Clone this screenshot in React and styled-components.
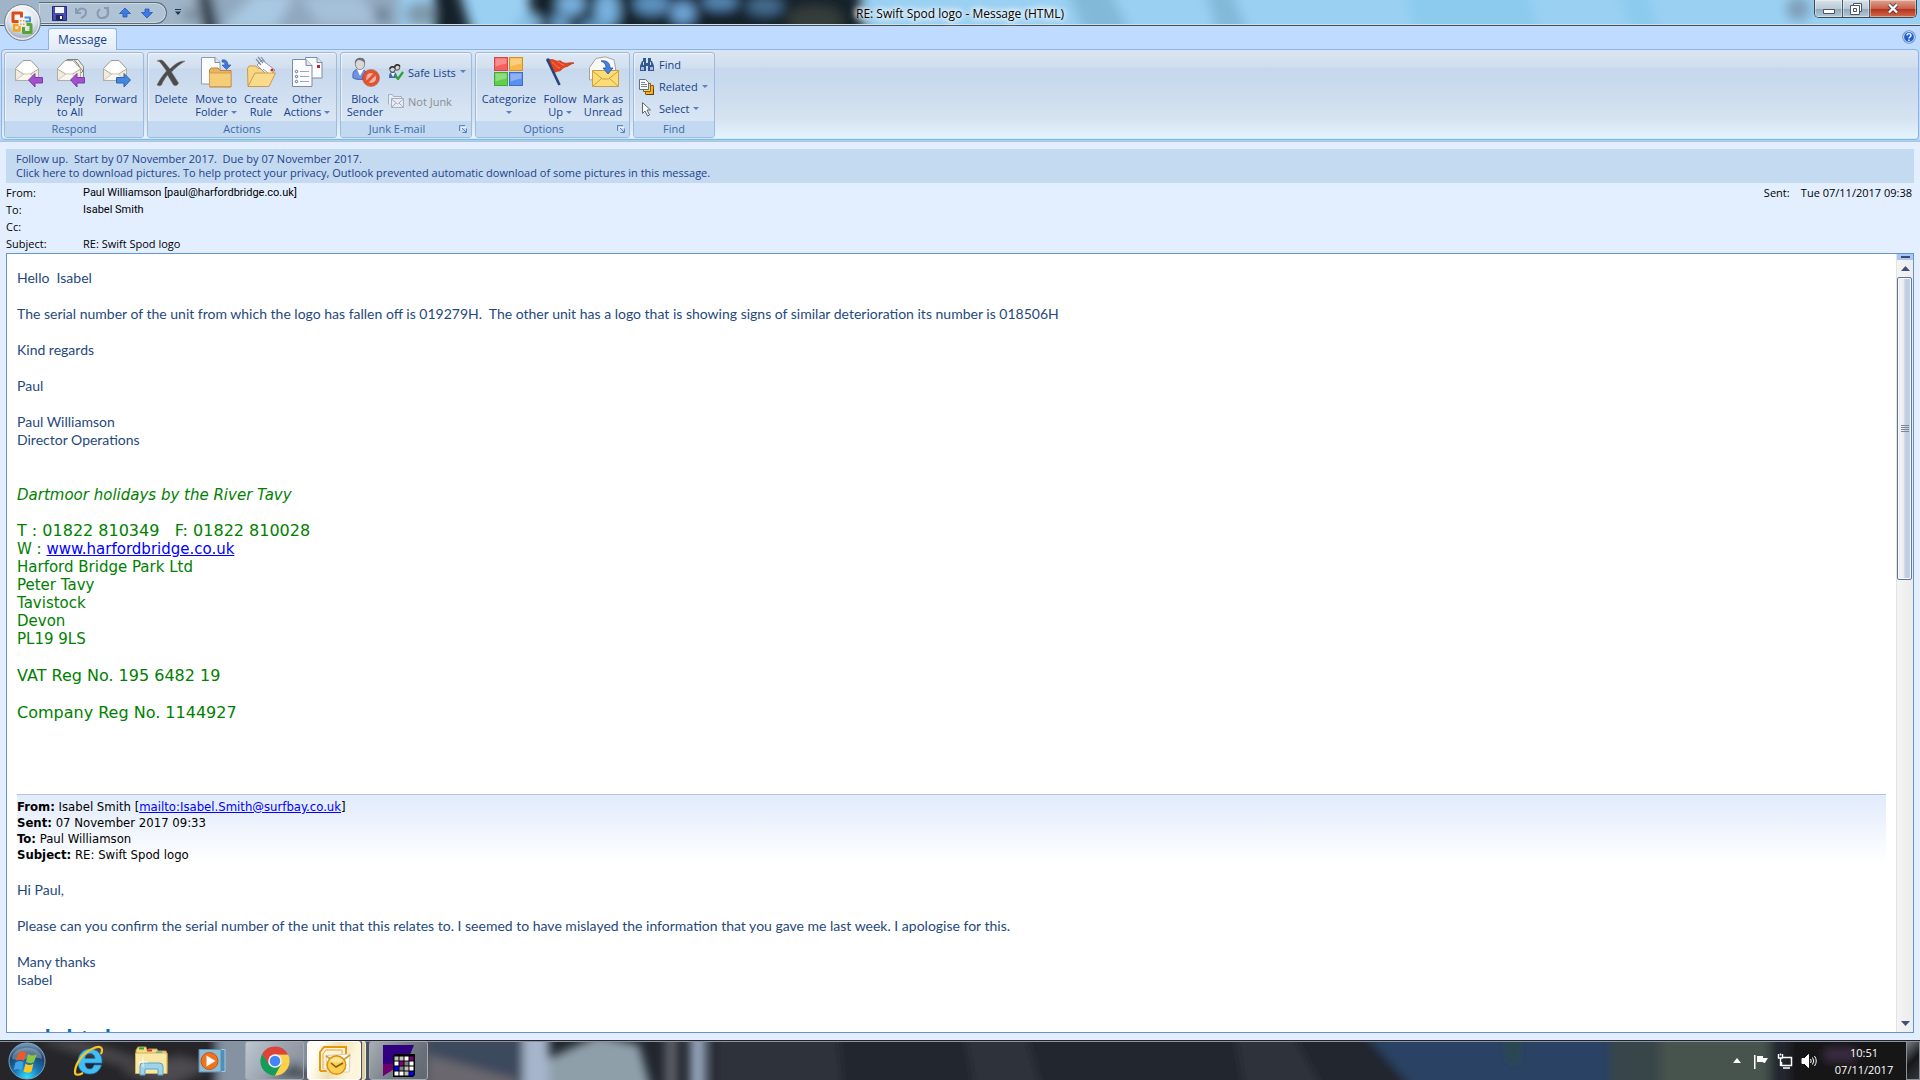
import styled, { createGlobalStyle } from "styled-components";

const GlobalStyle = createGlobalStyle`
  * {
    box-sizing: border-box;
  }
  body {
    margin: 0;
    overflow: hidden;
    font-family: "Open Sans", "Noto Sans", sans-serif;
    font-size: 11px;
  }
  button {
    border: 0;
    margin: 0;
    padding: 0;
    background: none;
    color: inherit;
    font: inherit;
  }
  svg {
    display: block;
    flex: none;
  }
`;

const Page = styled.div`
  display: flex;
  flex-direction: column;
  height: 100vh;
  background: #e3efff;
`;

/* ---------- title bar ---------- */

const TitleBar = styled.header`
  position: relative;
  display: flex;
  align-items: flex-start;
  height: 26px;
  border-bottom: 1px solid #3f5261;
  background: #9ad1f3;
`;

const Backdrop = styled.svg`
  position: absolute;
  inset: 0;
  width: 100%;
  height: 100%;
`;

const OfficeButton = styled.button`
  position: absolute;
  left: 3px;
  top: 3px;
  z-index: 2;
`;

const QuickAccess = styled.div`
  position: relative;
  display: flex;
  align-items: center;
  gap: 6px;
  width: 128px;
  height: 22px;
  margin: 2px 0 0 39px;
  padding-left: 13px;
  border: 1px solid #5c6c7a;
  border-left: 0;
  border-radius: 0 11px 11px 0;
  background: rgba(190, 207, 224, 0.55);
  box-shadow: inset 0 0 0 1px rgba(255, 255, 255, 0.35);
`;

const QuickMore = styled.button`
  position: relative;
  margin: 9px 0 0 8px;
`;

const WindowTitle = styled.h1`
  position: relative;
  flex: 1;
  margin: 0;
  padding: 5px 75px 0 0;
  font-size: 12px;
  font-weight: 400;
  line-height: 18px;
  text-align: center;
  text-shadow: 0 0 4px #fff, 0 0 6px #fff, 0 0 8px #fff, 0 0 10px #fff;
`;

const WindowButtons = styled.div`
  position: relative;
  display: flex;
  height: 18px;
  margin-right: 3px;
  border: 1px solid #3c4852;
  border-top: 0;
  border-radius: 0 0 5px 5px;
  overflow: hidden;
`;

const WindowButton = styled.button`
  display: flex;
  align-items: center;
  justify-content: center;
  width: ${(props) => (props.$close ? 47 : 27)}px;
  height: 17px;
  border-left: ${(props) => (props.$first ? 0 : 1)}px solid #4c5a66;
  box-shadow: inset 0 0 0 1px rgba(255, 255, 255, 0.4);
  background: ${(props) =>
    props.$close
      ? "linear-gradient(#dfa594, #c9604a 50%, #b5301a 52%, #cf6a4c)"
      : "linear-gradient(#d7e2ea, #b9cad7 50%, #8fa8bb 52%, #b4c9d8)"};
`;

/* ---------- ribbon ---------- */

const TabRow = styled.nav`
  display: flex;
  align-items: flex-start;
  justify-content: space-between;
  height: 23px;
  padding: 2px 4px 0 48px;
  background: #bfdbff;
`;

const Tab = styled.button`
  position: relative;
  z-index: 1;
  width: 69px;
  height: 22px;
  border: 1px solid #8db2e3;
  border-bottom: 0;
  border-radius: 3px 3px 0 0;
  background: linear-gradient(#f4f9ff, #e1eaf6);
  color: #15428b;
  font-size: 12px;
  line-height: 20px;
`;

const HelpButton = styled.button`
  margin-top: 2px;
`;

const RibbonWrap = styled.div`
  padding: 0 1px 2px;
  background: linear-gradient(#bfdbff 96%, #a9c1de);
`;

const Ribbon = styled.div`
  display: flex;
  gap: 3px;
  height: 91px;
  padding: 2px;
  border: 1px solid #8db2e3;
  border-radius: 4px;
  box-shadow: inset 0 -1px 0 #b9f3fd;
  background: linear-gradient(
    #dbe6f4 0,
    #cfddec 17px,
    #c7d8ee 18px,
    #c9d9ed 32px,
    #d5e3f0 68px,
    #e5f3fe 88px
  );
`;

const GroupBox = styled.section`
  display: flex;
  flex-direction: column;
  width: ${(props) => props.$width}px;
  height: 86px;
  border: 1px solid #9ebbdb;
  border-radius: 3px;
  box-shadow: inset 1px 1px 0 rgba(255, 255, 255, 0.5);
  background: linear-gradient(
    #dee8f5 0,
    #d1dfef 15px,
    #c7d8ed 16px,
    #d9e6f4 68px
  );
  overflow: hidden;
`;

const GroupBody = styled.div`
  display: flex;
  flex: 1;
  padding: 3px 0 0 3px;
`;

const GroupTitle = styled.div`
  display: flex;
  align-items: center;
  height: 16px;
  background: #c2d9f1;
  color: #3e6aaa;
  line-height: 16px;

  span {
    flex: 1;
    padding-right: ${(props) => (props.$launcher ? 6 : 0)}px;
    text-align: center;
  }

  button {
    margin-right: 4px;
  }
`;

const BigButton = styled.button`
  display: flex;
  flex-direction: column;
  align-items: center;
  width: ${(props) => props.$width}px;
  color: #15428b;
  line-height: 13px;
  white-space: nowrap;

  > svg {
    margin-bottom: 4px;
  }
`;

const LabelLine = styled.span`
  display: flex;
  align-items: center;
  gap: 3px;
  height: 13px;

  svg {
    margin-top: 2px;
  }
`;

const SmallButtons = styled.div`
  display: flex;
  flex-direction: column;
  justify-content: center;
  gap: ${(props) => props.$gap}px;
  padding: 0 0 4px 2px;
`;

const SmallButton = styled.button`
  display: flex;
  align-items: center;
  gap: 4px;
  height: 16px;
  color: ${(props) => (props.disabled ? "#8d8d8d" : "#15428b")};
  white-space: nowrap;
`;

/* ---------- message header ---------- */

const Notice = styled.button`
  display: block;
  margin: 7px 6px 0;
  padding: 3px 10px;
  background: #c4daf0;
  color: #1e3f8b;
  line-height: 14px;
  text-align: left;
  white-space: pre-wrap;
`;

const Fields = styled.div`
  display: flex;
  justify-content: space-between;
  padding: 1px 8px 1px 6px;
`;

const FieldList = styled.dl`
  display: grid;
  grid-template-columns: ${(props) => props.$label}px auto;
  grid-auto-rows: 17px;
  margin: 0;
  line-height: 17px;

  dt,
  dd {
    margin: 0;
    white-space: nowrap;
  }
`;

const Person = styled.dd`
  font-family: Roboto, "Open Sans", sans-serif;
`;

/* ---------- reading pane ---------- */

const Pane = styled.main`
  display: flex;
  flex: 1;
  min-height: 0;
  margin: 0 6px 7px;
  border: 1px solid #6593cf;
  background: #fff;
`;

const Mail = styled.article`
  flex: 1;
  padding: 15px 10px 0;
  overflow: hidden;
  color: #1f497d;
  font-family: Lato, "Open Sans", sans-serif;
  font-size: 14px;
  line-height: 18px;
  white-space: pre-wrap;

  p {
    margin: 0 0 18px;
  }

  a {
    color: #0000ff;
  }
`;

const Signature = styled.div`
  margin: 37px 0 72px;
  color: #008000;
  font-family: Verdana, "DejaVu Sans", sans-serif;
  font-size: 15px;
`;

const Phones = styled.span`
  font-size: 16px;
`;

const Registration = styled.p`
  font-size: 16px;
  line-height: 19px;
`;

const Quoted = styled.div`
  margin-bottom: 18px;
  padding-top: 4px;
  border-top: 1px solid #b5c4df;
  background: linear-gradient(#e1ebfb, #fff);
  color: #000;
  font-family: Tahoma, "DejaVu Sans Condensed", sans-serif;
  font-size: 13px;
  line-height: 16px;
`;

const CutHeading = styled.h2`
  display: flex;
  gap: 8px;
  margin: 35px 0 0;
  padding-left: 20px;
  color: #0070c0;
  font-size: 24px;
  line-height: 30px;
`;

const ScrollBar = styled.div`
  display: flex;
  flex-direction: column;
  width: 17px;
  border-left: 1px solid #e3e3e3;
  background: linear-gradient(90deg, #f4f4f4, #ececec);
`;

const SplitHandle = styled.div`
  height: 6px;
  padding: 2px 4px;
  background: #a6c6f4;

  &::before {
    content: "";
    display: block;
    height: 2px;
    width: 9px;
    background: #3d4a6b;
  }
`;

const ScrollArrow = styled.button`
  display: flex;
  align-items: center;
  justify-content: center;
  height: 17px;
`;

const Track = styled.div`
  flex: 1;
`;

const Thumb = styled.div`
  display: flex;
  flex-direction: column;
  align-items: center;
  justify-content: center;
  gap: 1px;
  width: 15px;
  height: 41%;
  border: 1px solid #61759c;
  border-radius: 2px;
  box-shadow: inset 0 0 0 1px #f4f8fc;
  background: linear-gradient(90deg, #eef0f4 40%, #c3d1e2 55%, #bccbdf 85%, #dce5f0);
`;

const Grip = styled.i`
  width: 8px;
  height: 1px;
  background: #7d8794;
`;

/* ---------- taskbar ---------- */

const TaskBar = styled.footer`
  position: relative;
  display: flex;
  align-items: stretch;
  height: 40px;
  border-top: 1px solid #20262e;
  background: #22272e;
  overflow: hidden;
`;

const Launcher = styled.button`
  position: relative;
  display: flex;
  align-items: center;
  justify-content: center;
  width: ${(props) => props.$width}px;
`;

const TaskButton = styled.button`
  position: relative;
  display: flex;
  align-items: center;
  justify-content: center;
  width: ${(props) => (props.$active ? 54 : 59)}px;
  margin-right: ${(props) => (props.$active ? 0 : 3)}px;
  border: 1px solid ${(props) => (props.$active ? "#fff" : "#a4aab1")};
  border-radius: 3px;
  background: ${(props) =>
    props.$active
      ? "linear-gradient(110deg, #fffdf4 20%, #efdfae 50%, #fdf6dc 80%)"
      : "linear-gradient(120deg, rgba(230,235,240,.6), rgba(170,178,188,.45) 50%, rgba(120,128,140,.35))"};
`;

const StackEdge = styled.i`
  position: relative;
  width: 5px;
  margin-right: 3px;
  border: 1px solid #f7efd2;
  border-left-color: #55513f;
  border-radius: 0 3px 3px 0;
  background: #d9cfae;
`;

const Tray = styled.div`
  position: relative;
  display: flex;
  align-items: center;
  gap: 8px;
  margin-left: auto;
`;

const HiddenIcons = styled.button`
  margin-right: 4px;
`;

const Clock = styled.time`
  width: 68px;
  margin-left: 5px;
  color: #fff;
  line-height: 17px;
  text-align: center;
`;

const ShowDesktop = styled.button`
  align-self: stretch;
  width: 14px;
  border: 1px solid #8b9096;
  background: linear-gradient(135deg, #777c80, #15181b 50%, #33373b);
`;

/* ---------- drawings ---------- */

const Caret = () => (
  <svg width="6" height="4" viewBox="0 0 6 4">
    <path d="M0 0h6L3 3z" fill="#5a82bd" />
  </svg>
);

const Launch = () => (
  <svg width="8" height="8" viewBox="0 0 8 8" fill="none" stroke="#5f83b5">
    <path d="M.5 6V.5H6" />
    <path d="M3 3l4 4M7.500 3.500v4h-4" />
    <path d="M2.500 5V2.500H7" stroke="#fff" opacity=".7" />
  </svg>
);

const Envelope = () => (
  <>
    <path d="M3.500 12.500 11 4.500h8l7.500 8v12h-23z" fill="#f7f6f2" stroke="#a09e98" />
    <path d="M5 12 11.500 6h7l6 6.500L15 18z" fill="#fff" />
    <path d="M3.500 13 12 18.500h6L26.500 13v11.500h-23z" fill="#f1ece0" stroke="#b3ad9f" />
    <path d="M4 24 12 18h6l8 6" fill="#f9f7f0" stroke="#d0c9b8" />
  </>
);

const LeftArrow = () => (
  <path d="M16.500 24 23 17.500v4h7.500v5.500H23v4z" fill="#a44fd0" stroke="#7c3da5" />
);

const ReplyIcon = () => (
  <svg width="32" height="32" viewBox="0 0 32 32">
    <Envelope />
    <LeftArrow />
  </svg>
);

const ReplyAllIcon = () => (
  <svg width="32" height="32" viewBox="0 0 32 32">
    <path d="M12 9 17 3.500h7l5.500 7v13h-9z" fill="#f0ede4" stroke="#85827c" />
    <path d="m24 9 5 6-5 5M8 9l5-5.500h7l5 6" fill="none" stroke="#85827c" />
    <Envelope />
    <LeftArrow />
  </svg>
);

const ForwardIcon = () => (
  <svg width="32" height="32" viewBox="0 0 32 32">
    <Envelope />
    <path d="M30.500 24 24 17.500v4h-7.500v5.500H24v4z" fill="#4485dd" stroke="#2a62b5" />
  </svg>
);

const DeleteIcon = () => (
  <svg width="32" height="32" viewBox="0 0 32 32">
    <path
      d="M2 5c4-2 6-1 8 2l5 6c5-5 9-8 15-8-5 3-10 7-13.500 11l7 11c-1 3-4 3-5 2l-6-10c-3 4-5 7-6 10-1 1-3 1-4.500 0 3-6 6-10 9.500-14L6.500 8C5 6 4 5 2 5z"
      fill="#4c4c4c"
      stroke="#6e6e6e"
      strokeWidth=".5"
    />
  </svg>
);

const MoveIcon = () => (
  <svg width="32" height="32" viewBox="0 0 32 32">
    <path d="M1.500 1.500H15l5 5V28H1.500z" fill="#fbfcfe" stroke="#8d99ac" />
    <path d="M15 1.500v5h5" fill="#dfe6f0" stroke="#7e8ba0" />
    <path d="M22 4c4-1 6 2 6 5h3l-4.500 4.500L22 9h3c0-2-1-3-3-3z" fill="#3f78d8" stroke="#23509f" strokeWidth=".6" />
    <path d="M9.500 14 11 12h7l2 2.500h11V31H9.500z" fill="#e8b366" stroke="#b98439" />
    <path d="M9.500 17H31v13.500H9.500z" fill="#f5cd78" stroke="#cf9f52" />
  </svg>
);

const CreateRuleIcon = () => (
  <svg width="32" height="32" viewBox="0 0 32 32">
    <path d="M2.500 12.500 4 10h7l2 2.500h10V30h-20z" fill="#f8d684" stroke="#c99a4b" />
    <path d="m12 9 5-5 13 10-6 7z" fill="#fff" stroke="#8d99ac" />
    <path d="M11 3l5 6M13 1l5 6M16 1l4 5" stroke="#7e8ba0" strokeWidth="1.200" />
    <path d="m18 13 5 4" stroke="#8894a8" />
    <circle cx="27" cy="14" r="1.600" fill="#d22" />
    <path d="M3 30.500 10 17h20.500L24 30.500z" fill="#fadb8c" stroke="#c99a4b" />
  </svg>
);

const OtherActionsIcon = () => (
  <svg width="32" height="32" viewBox="0 0 32 32">
    <path d="M14.500 1.500H26l5 5V22H14.500z" fill="#fbfcfe" stroke="#7e8ba0" />
    <path d="M26 1.500v5h5" fill="#dfe6f0" stroke="#7e8ba0" />
    <rect x="26" y="9" width="3" height="3" fill="#c8202a" />
    <path d="M1.500 3.500H15l6 6v21H1.500z" fill="#fbfcfe" stroke="#7e8ba0" />
    <path d="M15 3.500v6h6" fill="#dfe6f0" stroke="#7e8ba0" />
    <path d="M9 15.500h9M9 20.500h9M9 25.500h9" stroke="#9aa5b5" />
    <g fill="#fff" stroke="#596b88">
      <circle cx="5.500" cy="15.500" r="1.200" />
      <circle cx="5.500" cy="20.500" r="1.200" />
      <circle cx="5.500" cy="25.500" r="1.200" />
    </g>
  </svg>
);

const BlockIcon = () => (
  <svg width="32" height="32" viewBox="0 0 32 32">
    <path d="M4 22c-1-7 2-9 7-9s7 3 7 9c-4 2-10 2-14 0z" fill="#6f93e4" stroke="#3a559c" strokeWidth=".8" />
    <path d="m8 13 3 7 4-7z" fill="#fff" />
    <ellipse cx="11" cy="8" rx="4.700" ry="5.600" fill="#d8d8d8" stroke="#777" strokeWidth=".8" />
    <path d="M6 8C5.500 4 7.500 1.800 11.500 1.800c4 0 5 3 4.500 6.200-1-3-4-4-6-4s-3 2-4 4z" fill="#707070" />
    <circle cx="22" cy="22" r="6.600" fill="#f3a58d" fillOpacity=".7" stroke="#e8502a" strokeWidth="3" />
    <path d="m17.500 26.500 9-9" stroke="#e8502a" strokeWidth="3" />
    <circle cx="22" cy="22" r="8.400" fill="none" stroke="#a3280d" strokeWidth=".6" />
  </svg>
);

const SafeIcon = () => (
  <svg width="16" height="16" viewBox="0 0 16 16">
    <path d="M1 14c0-5 1-6 4-6s4 2 4 6z" fill="#4668b8" />
    <path d="M3 9h4l-2 4z" fill="#fff" />
    <circle cx="9" cy="3.500" r="2.700" fill="#d6d6d6" stroke="#444" />
    <circle cx="4.500" cy="5.500" r="2.700" fill="#d6d6d6" stroke="#444" />
    <path d="M2 5c0-3 5-3 5-.5M7 3c0-3 4-3 5-.5" stroke="#333" fill="none" strokeWidth="1.500" />
    <path d="m7 11 3 4 5-7" fill="none" stroke="#2fa02f" strokeWidth="2.200" />
  </svg>
);

const NotJunkIcon = () => (
  <svg width="16" height="16" viewBox="0 0 16 16" fill="#e9edf3" stroke="#a5b0c0">
    <path d="M.5 11.500V1.500h4l1 2h8v3" />
    <path d="M3.500 5.500h12v9h-12z" />
    <path d="m3.500 6 6 5 6-5M4 14l4-4M15 14l-4-4" fill="none" />
  </svg>
);

const Square = ({ x, y, light, dark, edge }) => (
  <g>
    <rect x={x} y={y} width="13" height="13" fill={dark} stroke={edge} />
    <path d={`M${x + 1} ${y + 1}h11v5q-6 1-11 3z`} fill={light} />
  </g>
);

const CategorizeIcon = () => (
  <svg width="32" height="32" viewBox="0 0 32 32">
    <Square x={1.5} y={1.5} light="#f98c8c" dark="#f46060" edge="#d04a4a" />
    <Square x={16.5} y={1.5} light="#fbcf7e" dark="#f8b64c" edge="#d4921f" />
    <Square x={1.5} y={16.5} light="#8fdd7e" dark="#62cf4c" edge="#48a836" />
    <Square x={16.5} y={16.5} light="#8db2f5" dark="#5b8eef" edge="#3f6bc0" />
  </svg>
);

const FlagIcon = () => (
  <svg width="32" height="32" viewBox="0 0 32 32">
    <path d="M5 4c4-2 6 2 10 1 2-1 3 2 5 2 3 1 6-1 10 0-4 1-6 4-9 4-3 1-4 4-6 4-3 0-4 1-5 3z" fill="#e8431f" stroke="#b8381b" strokeWidth=".8" />
    <path d="M8 6c3 2 5 6 8 6M14 6c2 0 3 3 6 3" fill="none" stroke="#f98465" />
    <path d="m3.500 4 12 25" stroke="#2b4372" strokeWidth="2.600" />
    <circle cx="4" cy="4" r="1.800" fill="#2b4372" />
  </svg>
);

const UnreadIcon = () => (
  <svg width="32" height="32" viewBox="0 0 32 32">
    <path d="M2.500 11.500 9 2.500 18 .8l9 3 1.500 8v12h-26z" fill="#f8f8f6" stroke="#a3a39f" />
    <path d="M5.500 14.500h26v16h-26z" fill="#fbdc76" stroke="#c9a040" />
    <path d="m5.500 15 10 8h6l10-8M6 30l9-8M31 30l-9-8" fill="none" stroke="#c9a040" />
    <path d="M14 5c6-1 9 2 9 7h3l-5 6-5-6h3c0-3-1-5-5-7z" fill="#4480e0" stroke="#2453a8" strokeWidth=".8" />
  </svg>
);

const FindIcon = () => (
  <svg width="16" height="16" viewBox="0 0 16 16" fill="#33588f">
    <path d="M1 9l2-5h4v10H1zM9 4h4l2 5v5H9z" />
    <path d="M4 1h3v3H4zM9 1h3v3H9zM7 6h2v3H7z" />
    <path d="M2 10h3v3H2zM11 10h3v3h-3z" fill="#9fbce6" />
    <path d="M4 5h1v3H4zM11 5h1v3h-1z" fill="#c9dcf5" />
  </svg>
);

const RelatedIcon = () => (
  <svg width="16" height="16" viewBox="0 0 16 16">
    <path d="M6.500 6.500h8v9h-8z" fill="#f0b429" stroke="#8a5d0b" />
    <path d="M4.500 4.500h7v8h-7z" fill="#fad364" stroke="#8a5d0b" />
    <path d="M.5.500h6l3 3v7h-9z" fill="#fff" stroke="#5f6f87" />
    <path d="M2 3.500h4M2 5.500h6M2 7.500h6" stroke="#6f86ac" />
    <path d="M8 15.500h6.500V10" fill="none" stroke="#5b3c05" />
  </svg>
);

const SelectIcon = () => (
  <svg width="16" height="16" viewBox="0 0 16 16">
    <path d="M3.500 1.500v11l2.500-2.500 2.500 5 2-1-2.500-5h3.500z" fill="#fff" stroke="#5d6673" />
  </svg>
);

const OfficeLogo = () => (
  <svg width="39" height="39" viewBox="0 0 39 39">
    <defs>
      <radialGradient id="orb" cx=".5" cy=".3" r=".75">
        <stop offset="0" stopColor="#fff" />
        <stop offset=".55" stopColor="#dde3ea" />
        <stop offset=".8" stopColor="#aab5c4" />
        <stop offset="1" stopColor="#f1f5fa" />
      </radialGradient>
    </defs>
    <circle cx="19.500" cy="19.500" r="18" fill="url(#orb)" stroke="#75818f" />
    <circle cx="19.500" cy="19.500" r="16.500" fill="none" stroke="#fff" opacity=".8" />
    <g fill="none" strokeWidth="3" strokeLinejoin="round">
      <path d="M15.500 18.500H10V10h8.500v4.500" stroke="#dd4a14" />
      <path d="M21.500 14.500h5.500V18.500H22.500" stroke="#3d8edb" strokeWidth="2" />
      <path d="M15.500 22H11v5.500h5.500V23" stroke="#f2a51c" strokeWidth="2.400" />
      <path d="M20.500 24v5.500H28V21.500H23.500" stroke="#56a52c" />
    </g>
    <path d="M17 17h1.500v1.500H17zM20 17h1.500v1.500H20zM17 20.500h1.500V22H17zM20 20.500h1.500V22H20z" fill="#f0a020" />
  </svg>
);

const SaveIcon = () => (
  <svg width="15" height="15" viewBox="0 0 15 15">
    <path d="M.5.500h14v14h-14z" fill="#4a4bb5" stroke="#29297d" />
    <path d="M3 1h9v6H3z" fill="#f2f5fc" />
    <path d="M4 9h7v5H4z" fill="#23235e" />
    <path d="M8 10h2v3H8z" fill="#fff" />
  </svg>
);

const UndoIcon = ({ flip }) => (
  <svg width="16" height="16" viewBox="0 0 16 16" fill="none" stroke="#8799b3" strokeWidth="2">
    {flip ? (
      <path d="M5 4c-4 3-3 9 2 9s8-4 5-9M13 8V3H9" />
    ) : (
      <path d="M3 3v5h5M4 7c3-5 9-4 9 0 0 3-2 5-5 6" />
    )}
  </svg>
);

const NavArrow = ({ down }) => (
  <svg width="16" height="16" viewBox="0 0 16 16">
    <path
      d={down ? "M8 13 2.500 7.500h3.500V4h4v3.500h3.500z" : "M8 3 2.500 8.500h3.500V12h4V8.500h3.500z"}
      fill="#3d7be6"
      stroke="#2356b6"
      strokeWidth=".8"
    />
  </svg>
);

const StartOrb = () => (
  <svg width="38" height="38" viewBox="0 0 38 38">
    <defs>
      <radialGradient id="start" cx=".5" cy=".95" r=".9">
        <stop offset="0" stopColor="#2fe0ff" />
        <stop offset=".4" stopColor="#1a78b8" />
        <stop offset=".75" stopColor="#1b4268" />
        <stop offset="1" stopColor="#6c93b3" />
      </radialGradient>
    </defs>
    <circle cx="19" cy="19" r="18" fill="url(#start)" stroke="#7fa5c0" />
    <path d="M4 17C5 2 33 2 34 17c-9-4-21 3-30 0z" fill="#fff" opacity=".28" />
    <path d="M10 11c3-2 6-2 8 0l-2 8c-3-2-5-2-8 0z" fill="#ee5a25" />
    <path d="M20 12c3 2 6 2 9 0l-3 8c-3 2-6 1-8 0z" fill="#8cc63e" />
    <path d="M7.500 20.500c3-2 6-2 8 0l-2 8c-3-2-5-2-8 0z" fill="#3fa3ea" />
    <path d="M17.500 21.500c3 2 5 2 8 0l-2 8c-3 2-6 1-8 0z" fill="#fbc61d" />
  </svg>
);

const IeIcon = () => (
  <svg width="32" height="32" viewBox="0 0 32 32">
    <path
      d="M28.500 20c-2 6-6 9-11.500 9-8 0-12-5-12-12S10 4 17 4s12.500 5 12 14H12c0 4 2 6 5 6 2 0 3-1 4-4zM12 13.500h10c0-3-2-5-5-5s-5 2-5 5z"
      fill="#45bdf2"
      stroke="#1b7fc4"
      strokeWidth=".7"
      fillRule="evenodd"
    />
    <path d="M28 9c3-7-1-9-9-5C10 8 2 19 2 27c0 4 4 3 8 1" fill="none" stroke="#f5c624" strokeWidth="2.200" />
  </svg>
);

const FolderIcon = () => (
  <svg width="34" height="32" viewBox="0 0 34 32">
    <path d="M2 5 4 2h8l1 3 2-1h8l1 2h8l1 3v19H2z" fill="#f2dc8c" stroke="#b89b44" />
    <path d="M5 2.500h5v2H5z" fill="#2ba52b" />
    <path d="M13 4.500h5v2h-5z" fill="#d33" />
    <path d="M22 6.500h6v2h-6z" fill="#35a3e0" />
    <path d="M1.500 8H33v20.500H1.500z" fill="#f8e8a6" stroke="#cdb15a" />
    <path d="M6 29V21q0-3 3-3h16q4 0 4 3v9h-5v-6H11v6H6z" fill="#9ed3ec" stroke="#5da3c7" />
    <path d="M9 12v10M4 17h10" stroke="#fff" opacity=".8" />
  </svg>
);

const PlayerIcon = () => (
  <svg width="28" height="28" viewBox="0 0 28 28">
    <path d="M6 2.500h21v22H6z" fill="#4f8fb8" stroke="#a3cbe2" />
    <path d="M1 2.500h22v22.500H1z" fill="#8fbcd8" stroke="#5790b5" />
    <circle cx="11.500" cy="14" r="8.500" fill="#ee7420" stroke="#c95410" />
    <path d="m8.500 8.500 9 5.500-9 5.500z" fill="#fff" />
  </svg>
);

const ChromeIcon = () => (
  <svg width="30" height="30" viewBox="0 0 30 30">
    <path d="M15 8.400h13A14.700 14.700 0 0 1 14.600 29.700L21 18z" fill="#fdd14a" />
    <path d="M2.300 7.700A14.700 14.700 0 0 0 14.700 29.700L21 18.500 9.300 18.500z" fill="#129d59" />
    <path d="M15 8.400H28A14.700 14.700 0 0 0 2.300 7.700L9 19z" fill="#db4437" />
    <circle cx="15" cy="15" r="6.800" fill="#f4f4f4" />
    <circle cx="15" cy="15" r="5.300" fill="#4285f4" />
  </svg>
);

const OutlookIcon = () => (
  <svg width="34" height="32" viewBox="0 0 34 32">
    <path d="M3 26V7l4-5h22v8" fill="#fdf3d6" stroke="#e8960f" strokeWidth="2" />
    <path d="M6 24V9l3-4h16v5" fill="none" stroke="#e8a43c" />
    <path d="M3 26h9" stroke="#e8960f" strokeWidth="2" />
    <path d="M9 10.500 33 9l-1 18H10z" fill="#fff" stroke="#d9cdb0" />
    <path d="m9 11 12 8 12-9" fill="none" stroke="#d89a30" strokeWidth="1.600" />
    <circle cx="19.500" cy="20" r="9.300" fill="#fbd04f" stroke="#d9920e" strokeWidth="1.400" />
    <path d="M13 16c3-5 10-5 13 0-4 2-9 2-13 0z" fill="#fff" opacity=".45" />
    <path d="m14 18 5 4 7-4" fill="none" stroke="#8a5d0b" strokeWidth="1.600" />
  </svg>
);

const tiles = [
  ["#c0c0c0", "#c0c0c0", "#fff", "#800080"],
  ["#fff", "#800080", "#808080", "#fff"],
  ["#0000ff", "#808080", "#c0c0c0", "#fff"],
  ["#fff", "#fff", "#c0c0c0", "#0000ff"],
];

const GridAppIcon = () => (
  <svg width="34" height="32" viewBox="0 0 34 32">
    <path d="M1 0h31l-5 12H14v10L1 31z" fill="#300080" />
    <path d="M1 19h11v5L1 31z" fill="#700070" />
    <path d="M11 11 13 9h20v21l-2 2H11z" fill="#000" />
    {tiles.map((row, y) =>
      row.map((fill, x) => (
        <rect key={`${x}-${y}`} x={12.5 + x * 5} y={11.5 + y * 5} width="4" height="4" fill={fill} />
      ))
    )}
  </svg>
);

/* ---------- data ---------- */

const respond = [
  { lines: ["Reply"], width: 40, Icon: ReplyIcon },
  { lines: ["Reply", "to All"], width: 44, Icon: ReplyAllIcon },
  { lines: ["Forward"], width: 48, Icon: ForwardIcon },
];

const actions = [
  { lines: ["Delete"], width: 40, Icon: DeleteIcon },
  { lines: ["Move to", "Folder"], width: 50, Icon: MoveIcon, menu: true },
  { lines: ["Create", "Rule"], width: 40, Icon: CreateRuleIcon },
  { lines: ["Other", "Actions"], width: 52, Icon: OtherActionsIcon, menu: true },
];

const options = [
  { lines: ["Categorize", ""], width: 60, Icon: CategorizeIcon, menu: true },
  { lines: ["Follow", "Up"], width: 42, Icon: FlagIcon, menu: true },
  { lines: ["Mark as", "Unread"], width: 44, Icon: UnreadIcon },
];

const Big = ({ lines, width, Icon, menu }) => (
  <BigButton $width={width}>
    <Icon />
    {lines.map((line, i) => (
      <LabelLine key={i}>
        {line}
        {menu && i === lines.length - 1 && <Caret />}
      </LabelLine>
    ))}
  </BigButton>
);

const Small = ({ Icon, label, menu, disabled }) => (
  <SmallButton disabled={disabled}>
    <Icon />
    {label}
    {menu && <Caret />}
  </SmallButton>
);

const Group = ({ title, width, launcher, children }) => (
  <GroupBox $width={width}>
    <GroupBody>{children}</GroupBody>
    <GroupTitle $launcher={launcher}>
      <span>{title}</span>
      {launcher && (
        <button aria-label={`${title} settings`}>
          <Launch />
        </button>
      )}
    </GroupTitle>
  </GroupBox>
);

const Title = () => (
  <TitleBar>
    <Backdrop viewBox="0 0 1920 25" preserveAspectRatio="none">
      <defs>
        <filter id="soft" filterUnits="userSpaceOnUse" x="-60" y="-40" width="2040" height="110">
          <feGaussianBlur stdDeviation="6" />
        </filter>
      </defs>
      <g filter="url(#soft)">
        <path d="M-40-30h250v90H-40z" fill="#9fb4c6" />
        <path d="M205-30h195v90H205z" fill="#91a9bf" />
        <path d="M196-10h14l12 50h-18z" fill="#26323c" />
        <path d="M220 30 255-6h40l-20 36z" fill="#a9c8e2" />
        <path d="M300-5h60l20 30h-60z" fill="#a5c0d9" />
        <circle cx="190" cy="15" r="6" fill="#65788b" />
        <circle cx="382" cy="15" r="7" fill="#5d7184" />
        <ellipse cx="420" cy="14" rx="14" ry="12" fill="#7f98ab" />
        <path d="M434-20h22l18 60h-40z" fill="#16222c" />
        <path d="M532-30h325l10 90H525z" fill="#182129" />
        <ellipse cx="528" cy="24" rx="14" ry="9" fill="#86c0e8" />
        <ellipse cx="571" cy="4" rx="14" ry="11" fill="#78b2e0" />
        <ellipse cx="560" cy="24" rx="10" ry="10" fill="#6a9fcb" />
        <ellipse cx="607" cy="10" rx="12" ry="18" fill="#78b2e0" />
        <ellipse cx="592" cy="28" rx="12" ry="8" fill="#5f94c4" />
        <ellipse cx="652" cy="4" rx="18" ry="10" fill="#5f94c4" />
        <ellipse cx="683" cy="13" rx="12" ry="11" fill="#6fa6da" />
        <ellipse cx="720" cy="2" rx="18" ry="7" fill="#5b8fc0" />
        <ellipse cx="765" cy="6" rx="18" ry="9" fill="#456d91" />
        <ellipse cx="815" cy="20" rx="28" ry="14" fill="#353e3a" />
        <path d="M1060-30h40l44 90h-50zM1200-30h24l34 90h-34z" fill="#83b9d8" />
        <path d="M1400-30h120l30 90h-130zM1610-30h30l30 90h-30z" fill="#8ccbee" />
        <circle cx="1798" cy="9" r="12" fill="#7d9fb9" />
      </g>
      <path d="M0 24h1920v1H0z" fill="#d3dfe0" />
    </Backdrop>
    <OfficeButton aria-label="Office Button">
      <OfficeLogo />
    </OfficeButton>
    <QuickAccess>
      <button aria-label="Save"><SaveIcon /></button>
      <button aria-label="Undo"><UndoIcon /></button>
      <button aria-label="Redo"><UndoIcon flip /></button>
      <button aria-label="Previous Item"><NavArrow /></button>
      <button aria-label="Next Item"><NavArrow down /></button>
    </QuickAccess>
    <QuickMore aria-label="Customize Quick Access Toolbar">
      <svg width="6" height="6" viewBox="0 0 6 6" fill="#1d3557">
        <path d="M0 0h6v1H0zM0 2.500h6L3 6z" />
      </svg>
    </QuickMore>
    <WindowTitle>RE: Swift Spod logo - Message (HTML)</WindowTitle>
    <WindowButtons>
      <WindowButton $first aria-label="Minimize">
        <svg width="12" height="10" viewBox="0 0 12 10">
          <path d="M.5 5.500h11v4H.5z" fill="#fff" stroke="#4b5563" />
        </svg>
      </WindowButton>
      <WindowButton aria-label="Restore">
        <svg width="12" height="12" viewBox="0 0 12 12" fill="#fff" stroke="#4b5563">
          <path d="M3.500.500h8v8h-8z" />
          <path d="M.5 2.500h9v9h-9z" />
          <path d="M3.500 5.500h3v3h-3z" />
        </svg>
      </WindowButton>
      <WindowButton $close aria-label="Close">
        <svg width="12" height="11" viewBox="0 0 12 11">
          <path d="m2 1.500 8 8m0-8-8 8" stroke="#5a3b3b" strokeWidth="4" />
          <path d="m2 1.500 8 8m0-8-8 8" stroke="#fff" strokeWidth="2.400" />
        </svg>
      </WindowButton>
    </WindowButtons>
  </TitleBar>
);

const RibbonArea = () => (
  <>
    <TabRow>
      <Tab>Message</Tab>
      <HelpButton aria-label="Help">
        <svg width="14" height="14" viewBox="0 0 14 14">
          <circle cx="7" cy="7" r="6.300" fill="#1f5fd0" stroke="#7e9cc9" />
          <circle cx="7" cy="7" r="5.400" fill="none" stroke="#fff" strokeWidth=".8" />
          <path d="M5 5.500c0-2.500 4-2.500 4 0C9 7 7 6.800 7 8.500M7 9.600v1.400" fill="none" stroke="#fff" strokeWidth="1.400" />
        </svg>
      </HelpButton>
    </TabRow>
    <RibbonWrap>
      <Ribbon>
        <Group title="Respond" width={140}>
          {respond.map((item, i) => <Big key={i} {...item} />)}
        </Group>
        <Group title="Actions" width={190}>
          {actions.map((item, i) => <Big key={i} {...item} />)}
        </Group>
        <Group title="Junk E-mail" width={132} launcher>
          <Big lines={["Block", "Sender"]} width={42} Icon={BlockIcon} />
          <SmallButtons $gap={13}>
            <Small Icon={SafeIcon} label="Safe Lists" menu />
            <Small Icon={NotJunkIcon} label="Not Junk" disabled />
          </SmallButtons>
        </Group>
        <Group title="Options" width={155} launcher>
          {options.map((item, i) => <Big key={i} {...item} />)}
        </Group>
        <Group title="Find" width={82}>
          <SmallButtons $gap={6}>
            <Small Icon={FindIcon} label="Find" />
            <Small Icon={RelatedIcon} label="Related" menu />
            <Small Icon={SelectIcon} label="Select" menu />
          </SmallButtons>
        </Group>
      </Ribbon>
    </RibbonWrap>
  </>
);

const MessageHeader = () => (
  <>
    <Notice>
      {"Follow up.  Start by 07 November 2017.  Due by 07 November 2017.\n"}
      Click here to download pictures. To help protect your privacy, Outlook prevented automatic download of some pictures in this message.
    </Notice>
    <Fields>
      <FieldList $label={77}>
        <dt>From:</dt>
        <Person>Paul Williamson [paul@harfordbridge.co.uk]</Person>
        <dt>To:</dt>
        <Person>Isabel Smith</Person>
        <dt>Cc:</dt>
        <Person />
        <dt>Subject:</dt>
        <dd>RE: Swift Spod logo</dd>
      </FieldList>
      <FieldList $label={37}>
        <dt>Sent:</dt>
        <dd>Tue 07/11/2017 09:38</dd>
      </FieldList>
    </Fields>
  </>
);

const Message = () => (
  <Mail>
    <p>{"Hello  Isabel"}</p>
    <p>
      {"The serial number of the unit from which the logo has fallen off is 019279H.  The other unit has a logo that is showing signs of similar deterioration its number is 018506H"}
    </p>
    <p>Kind regards</p>
    <p>Paul</p>
    <p>{"Paul Williamson\nDirector Operations"}</p>
    <Signature>
      <p><em>Dartmoor holidays by the River Tavy</em></p>
      <p>
        <Phones>{"T : 01822 810349   F: 01822 810028"}</Phones>
        {"\nW : "}
        <a href="#harfordbridge">www.harfordbridge.co.uk</a>
        {"\nHarford Bridge Park Ltd\nPeter Tavy\nTavistock\nDevon\nPL19 9LS"}
      </p>
      <Registration>VAT Reg No. 195 6482 19</Registration>
      <Registration>Company Reg No. 1144927</Registration>
    </Signature>
    <Quoted>
      <b>From:</b> Isabel Smith [<a href="#mailto">mailto:Isabel.Smith@surfbay.co.uk</a>]{"\n"}
      <b>Sent:</b> 07 November 2017 09:33{"\n"}
      <b>To:</b> Paul Williamson{"\n"}
      <b>Subject:</b> RE: Swift Spod logo
    </Quoted>
    <p>Hi Paul,</p>
    <p>
      Please can you confirm the serial number of the unit that this relates to. I seemed to have mislayed the information that you gave me last week. I apologise for this.
    </p>
    <p>{"Many thanks\nIsabel"}</p>
    <CutHeading>
      <span>d</span>
      <span>d</span>
      <span>t</span>
      <span>d</span>
    </CutHeading>
  </Mail>
);

const Scroll = () => (
  <ScrollBar>
    <SplitHandle />
    <ScrollArrow aria-label="Scroll up">
      <svg width="9" height="5" viewBox="0 0 9 5"><path d="M0 5h9L4.500 0z" fill="#3f4f78" /></svg>
    </ScrollArrow>
    <Track>
      <Thumb>
        <Grip />
        <Grip />
        <Grip />
        <Grip />
      </Thumb>
    </Track>
    <ScrollArrow aria-label="Scroll down">
      <svg width="9" height="5" viewBox="0 0 9 5"><path d="M0 0h9L4.500 5z" fill="#3f4f78" /></svg>
    </ScrollArrow>
  </ScrollBar>
);

const Desktop = () => (
  <TaskBar>
    <Backdrop viewBox="0 0 1920 40" preserveAspectRatio="none">
      <defs>
        <filter id="blur" filterUnits="userSpaceOnUse" x="-60" y="-40" width="2040" height="130">
          <feGaussianBlur stdDeviation="5" />
        </filter>
      </defs>
      <g filter="url(#blur)">
        <path d="M-30-30h250V80H-30z" fill="#27272b" />
        <path d="M40 0h40l60 20-10 6zM120 30l60-14 30 10-40 20z" fill="#4d4b50" />
        <path d="M217-30h40l10 110h-50z" fill="#8592a2" />
        <path d="M255-30h60V80h-50z" fill="#8e98a4" />
        <path d="M265 40l30-20 20 20z" fill="#20242b" />
        <path d="M310-30h120V80H310z" fill="#4c525c" />
        <path d="M428-30h95v80l-95-30z" fill="#3c4a5d" />
        <path d="M428 14l90 26v40h-90z" fill="#6a686e" />
        <path d="M523-30h26V80h-26z" fill="#a6b5cb" />
        <path d="M549 18l50-24 40 10 20 76H549z" fill="#8e9faa" />
        <path d="M665-30h12V80h-12z" fill="#5f6068" />
        <path d="M690-30h16V80h-16z" fill="#93a1b8" />
        <path d="M712-30h1208V80H712z" fill="#20252d" />
        <path d="M716-30h120l10 110H716zM960-30h60l30 110h-70zM1230-30h50l60 110h-90z" fill="#2d323a" />
        <path d="M1345-30h265V80h-170z" fill="#2a4263" />
        <path d="M1505-4h14v26h-10z" fill="#2c4a48" />
        <path d="M1610-30h60V80h-60z" fill="#37444a" />
        <path d="M1660-30h110V80h-110z" fill="#46524e" />
        <path d="M1790-30h160V80h-160z" fill="#121519" />
        <path d="M1825 8h30v12h-30z" fill="#3c2e45" />
      </g>
      <path d="M0 0h1920v1H0z" fill="#8b96a2" />
    </Backdrop>
    <Launcher $width={54} aria-label="Start"><StartOrb /></Launcher>
    <Launcher $width={70} aria-label="Internet Explorer"><IeIcon /></Launcher>
    <Launcher $width={54} aria-label="Windows Explorer"><FolderIcon /></Launcher>
    <Launcher $width={67} aria-label="Media Player"><PlayerIcon /></Launcher>
    <TaskButton aria-label="Chrome"><ChromeIcon /></TaskButton>
    <TaskButton $active aria-label="Outlook"><OutlookIcon /></TaskButton>
    <StackEdge />
    <TaskButton aria-label="Application"><GridAppIcon /></TaskButton>
    <Tray>
      <HiddenIcons aria-label="Show hidden icons">
        <svg width="8" height="5" viewBox="0 0 8 5"><path d="M0 5h8L4 0z" fill="#fff" /></svg>
      </HiddenIcons>
      <button aria-label="Action Center">
        <svg width="16" height="16" viewBox="0 0 16 16" fill="#fff">
          <path d="M1 2h1.500v14H1zM4 3h6v6H4zM10 5h5l-2 3-1 2-3-1z" />
        </svg>
      </button>
      <button aria-label="Network">
        <svg width="16" height="16" viewBox="0 0 16 16" fill="none" stroke="#fff">
          <path d="M6 4.500h8.500v8H4.500V9" strokeWidth="1.500" />
          <path d="M1.500 1v4h4V1M3.500 5v8M3.500.500v2M6 15h7" strokeWidth="1.400" />
        </svg>
      </button>
      <button aria-label="Volume">
        <svg width="16" height="16" viewBox="0 0 16 16" fill="none" stroke="#fff">
          <path d="M1 5.500h2.500l4-4v13l-4-4H1z" fill="#fff" />
          <path d="M9.500 6q1.500 2 0 4M11.500 4.500q2.500 3.500 0 7M13.500 3q3.500 5 0 10" />
        </svg>
      </button>
      <Clock>10:51<br />07/11/2017</Clock>
      <ShowDesktop aria-label="Show desktop" />
    </Tray>
  </TaskBar>
);

export default function App() {
  return (
    <Page>
      <GlobalStyle />
      <Title />
      <RibbonArea />
      <MessageHeader />
      <Pane>
        <Message />
        <Scroll />
      </Pane>
      <Desktop />
    </Page>
  );
}
